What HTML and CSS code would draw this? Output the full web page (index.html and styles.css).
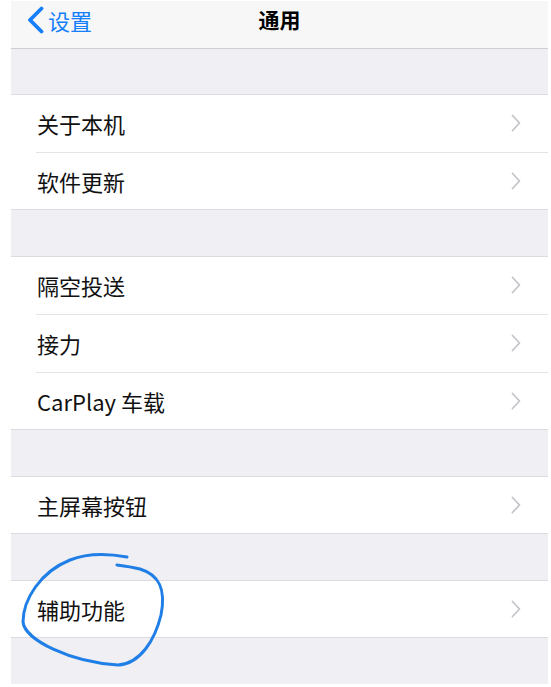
FILE: index.html
```html
<!DOCTYPE html>
<html lang="zh">
<head>
<meta charset="utf-8">
<link rel="stylesheet" href="styles.css">
</head>
<body>
<div class="screen">
  <div class="nav">
    <div class="back">
      <svg class="back-icon" width="19" height="28" viewBox="0 0 19 28"><path d="M15.5 2.5 L4 14 L15.5 25.5" fill="none" stroke="#157efb" stroke-width="3.8" stroke-linecap="round" stroke-linejoin="round"/></svg>
      <span class="back-text">设置</span>
    </div>
    <div class="title">通用</div>
  </div>
  <div class="gap first"></div>
  <div class="group">
    <div class="row"><span class="label">关于本机</span><svg class="chev" width="10" height="18" viewBox="0 0 10 18"><path d="M1.5 1.5 L8.5 9 L1.5 16.5" fill="none" stroke="#c4c4c9" stroke-width="1.8" stroke-linecap="round" stroke-linejoin="round"/></svg></div>
    <div class="row"><span class="label">软件更新</span><svg class="chev" width="10" height="18" viewBox="0 0 10 18"><path d="M1.5 1.5 L8.5 9 L1.5 16.5" fill="none" stroke="#c4c4c9" stroke-width="1.8" stroke-linecap="round" stroke-linejoin="round"/></svg></div>
  </div>
  <div class="gap"></div>
  <div class="group">
    <div class="row"><span class="label">隔空投送</span><svg class="chev" width="10" height="18" viewBox="0 0 10 18"><path d="M1.5 1.5 L8.5 9 L1.5 16.5" fill="none" stroke="#c4c4c9" stroke-width="1.8" stroke-linecap="round" stroke-linejoin="round"/></svg></div>
    <div class="row"><span class="label">接力</span><svg class="chev" width="10" height="18" viewBox="0 0 10 18"><path d="M1.5 1.5 L8.5 9 L1.5 16.5" fill="none" stroke="#c4c4c9" stroke-width="1.8" stroke-linecap="round" stroke-linejoin="round"/></svg></div>
    <div class="row"><span class="label">CarPlay 车载</span><svg class="chev" width="10" height="18" viewBox="0 0 10 18"><path d="M1.5 1.5 L8.5 9 L1.5 16.5" fill="none" stroke="#c4c4c9" stroke-width="1.8" stroke-linecap="round" stroke-linejoin="round"/></svg></div>
  </div>
  <div class="gap"></div>
  <div class="group">
    <div class="row"><span class="label">主屏幕按钮</span><svg class="chev" width="10" height="18" viewBox="0 0 10 18"><path d="M1.5 1.5 L8.5 9 L1.5 16.5" fill="none" stroke="#c4c4c9" stroke-width="1.8" stroke-linecap="round" stroke-linejoin="round"/></svg></div>
  </div>
  <div class="gap"></div>
  <div class="group">
    <div class="row"><span class="label">辅助功能</span><svg class="chev" width="10" height="18" viewBox="0 0 10 18"><path d="M1.5 1.5 L8.5 9 L1.5 16.5" fill="none" stroke="#c4c4c9" stroke-width="1.8" stroke-linecap="round" stroke-linejoin="round"/></svg></div>
  </div>
  <div class="gap last"></div>
</div>
<svg class="annot" width="551" height="687" viewBox="0 0 551 687"><path d="M127 557 C105 553 85 554 70 560 C40 572 23 600 23 622 C25 640 70 662 118 665 C140 664 155 640 161 615 C166 590 160 575 140 569 C132 567 125 566 117 565" fill="none" stroke="#1f7fe6" stroke-width="3" stroke-linecap="round"/></svg>
</body>
</html>
```
FILE: styles.css
```css
html, body {
  margin: 0;
  padding: 0;
  background: #ffffff;
}
body {
  width: 551px;
  height: 687px;
  overflow: hidden;
  position: relative;
  font-family: "Noto Sans CJK SC", "Noto Sans", sans-serif;
}
.screen {
  margin-left: 11px;
  width: 537px;
  padding-top: 1px;
}
.nav {
  height: 47px;
  background: #f7f7f8;
  border-bottom: 1px solid #cfcfd3;
  position: relative;
  display: flex;
  justify-content: center;
}
.back {
  position: absolute;
  left: 15px;
  top: 5px;
  display: flex;
  align-items: center;
  gap: 3px;
}
.back-icon {
  display: block;
}
.back-text {
  color: #157efb;
  font-size: 22px;
  line-height: 28px;
}
.title {
  font-size: 21px;
  font-weight: 600;
  color: #000;
  line-height: 28px;
  margin-top: 4px;
}
.gap {
  height: 46px;
  background: #efeff4;
}
.gap.first {
  height: 45px;
}
.group {
  background: #fff;
  box-shadow: inset 0 1px 0 #dcdce0, inset 0 -1px 0 #dcdce0;
}
.row {
  height: 58px;
  display: flex;
  align-items: center;
  justify-content: space-between;
  padding-left: 26px;
  padding-right: 27px;
  position: relative;
}
.row + .row::before {
  content: "";
  position: absolute;
  left: 25px;
  right: 0;
  top: 0;
  border-top: 1px solid #e4e4e7;
}
.label {
  font-size: 22px;
  color: #111;
  line-height: 28px;
}
.chev {
  display: block;
}
.annot {
  position: absolute;
  left: 0;
  top: 0;
  pointer-events: none;
}
```
